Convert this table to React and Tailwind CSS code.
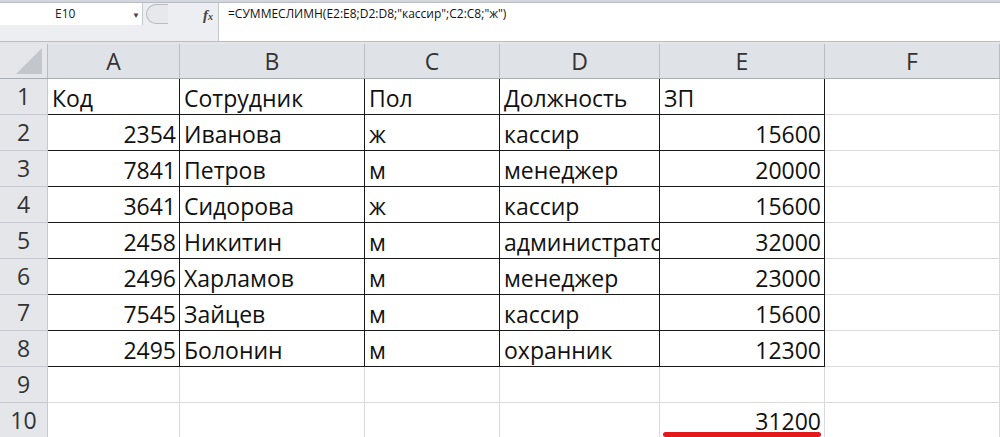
import React from "react";

const cols = [
  { key: "A", w: "w-[132px]" },
  { key: "B", w: "w-[185px]" },
  { key: "C", w: "w-[135px]" },
  { key: "D", w: "w-[160px]" },
  { key: "E", w: "w-[165px]" },
  { key: "F", w: "flex-1" },
];

const data = [
  ["Код", "Сотрудник", "Пол", "Должность", "ЗП"],
  ["2354", "Иванова", "ж", "кассир", "15600"],
  ["7841", "Петров", "м", "менеджер", "20000"],
  ["3641", "Сидорова", "ж", "кассир", "15600"],
  ["2458", "Никитин", "м", "администратор", "32000"],
  ["2496", "Харламов", "м", "менеджер", "23000"],
  ["7545", "Зайцев", "м", "кассир", "15600"],
  ["2495", "Болонин", "м", "охранник", "12300"],
  ["", "", "", "", ""],
  ["", "", "", "", "31200"],
];

const font = { fontFamily: '"Open Sans", "Liberation Sans", sans-serif' };

export default function App() {
  return (
    <div className="w-[1000px] h-[437px] overflow-hidden bg-white text-[#111]" style={font}>
      {/* formula bar */}
      <div className="h-[3px] bg-[#d3d6da] border-b border-[#b9bdc3]" />
      <div className="flex h-[38px] bg-[#eceef1]">
        <div className="w-[143px] flex flex-col">
          <div className="h-[22px] bg-white flex items-center relative border-r border-[#c4c8cd]">
            <span className="ml-[55px] text-[12px] text-[#222]">E10</span>
            <span className="absolute left-[132px] top-[6px] text-[8px] text-[#444]">▼</span>
          </div>
          <div className="flex-1" />
        </div>
        <div className="w-[75px] relative flex items-start">
          <div className="absolute left-[3px] top-[1px] w-[22px] h-[20px] rounded-l-full border border-r-0 border-[#b8bcc2] bg-[#e6e8eb]" />
          <span
            className="absolute left-[60px] top-[1px] text-[15px] italic font-bold text-[#444]"
            style={{ fontFamily: '"Liberation Serif", serif' }}
          >
            f<span className="text-[10px]">x</span>
          </span>
        </div>
        <div className="flex-1 bg-white border-l border-[#c4c8cd] pl-[9px] pt-[3px] text-[12px] text-[#111] leading-[16px]">
          =СУММЕСЛИМН(E2:E8;D2:D8;"кассир";C2:C8;"ж")
        </div>
      </div>
      <div className="h-[3px] bg-[#e3e5e8] border-t border-[#b9bdc3]" />

      {/* column header */}
      <div className="flex h-[35px] bg-[#dfe2e6] border-b border-[#a9aeb5]">
        <div className="w-[48px] relative border-r border-[#b9bec4] bg-[#e4e6e9]">
          <div
            className="absolute right-[5px] bottom-[4px] w-[26px] h-[26px] bg-[#c3c7cc]"
            style={{ clipPath: "polygon(100% 0, 100% 100%, 0 100%)" }}
          />
        </div>
        {cols.map((c) => (
          <div
            key={c.key}
            className={`${c.w} flex items-center justify-center border-r border-[#b9bec4] text-[23px] text-[#333]`}
          >
            {c.key}
          </div>
        ))}
      </div>

      {/* rows */}
      {data.map((row, ri) => {
        const inTable = ri < 8;
        return (
          <div key={ri} className="flex h-[36px]">
            <div className="w-[48px] flex items-center justify-center bg-[#e4e6e9] border-r border-b border-[#c6cad0] text-[23px] text-[#333]">
              {ri + 1}
            </div>
            {cols.map((c, ci) => {
              const val = row[ci] ?? "";
              const isNum = (ci === 0 || ci === 4) && ri > 0;
              const dark = inTable && ci < 5;
              return (
                <div
                  key={c.key}
                  className={`${c.w} relative overflow-hidden whitespace-nowrap flex items-center text-[23px] leading-none ${
                    ri === 9 ? "pt-[2px]" : "pt-[4px]"
                  } ${
                    dark ? "border-r-[1.5px] border-r-[#1a1a1a] border-b-[1.5px] border-b-[#1a1a1a]" : "border-r border-r-[#dadada] border-b border-b-[#dadada]"
                  } ${isNum ? "justify-end pr-[3px]" : "pl-[4px]"}`}
                >
                  {val}
                  {ri === 9 && ci === 4 && (
                    <div className="absolute left-[3px] right-[3px] bottom-[1px] h-[5px] rounded-full bg-[#e3191b]" />
                  )}
                </div>
              );
            })}
          </div>
        );
      })}
    </div>
  );
}
